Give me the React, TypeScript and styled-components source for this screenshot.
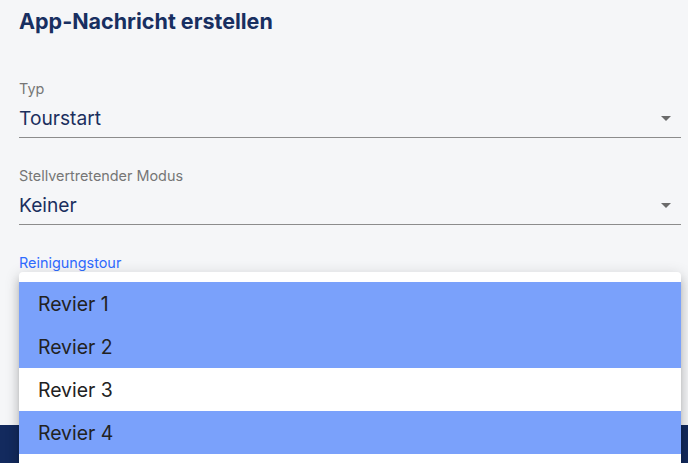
import React from 'react'
import styled, { createGlobalStyle } from 'styled-components'

const GlobalStyle = createGlobalStyle`
  html, body {
    margin: 0;
    padding: 0;
    background: #f5f6f8;
    font-family: Inter, "Noto Sans", sans-serif;
  }
`;

const Page = styled.div`
  position: relative;
  height: 463px;
  display: flex;
  flex-direction: column;
  overflow: hidden;
  background: #f5f6f8;
`;

const Content = styled.div`
  flex: 1;
  padding: 6px 7px 0 19px;
`;

const Title = styled.h1`
  margin: 0 0 45px;
  height: 30px;
  line-height: 30px;
  font-size: 21.5px;
  font-weight: 700;
  color: #182f61;
`;

const Field = styled.div<{ $open?: boolean }>`
  position: relative;
  margin-bottom: 30px;
  border-bottom: ${({ $open }) => ($open ? 'none' : '1px solid #8c8c8c')};
`;

const Label = styled.div<{ $active?: boolean }>`
  font-size: 14.4px;
  line-height: 16px;
  color: ${({ $active }) => ($active ? '#2f6bff' : '#767676')};
`;

const Value = styled.div`
  display: flex;
  align-items: center;
  justify-content: space-between;
  height: 26px;
  margin-top: 8px;
  margin-bottom: 6px;
  font-size: 19.2px;
  color: #1b2f5e;
`;

const Arrow = styled.span`
  width: 0;
  height: 0;
  margin-right: 10px;
  border-left: 5px solid transparent;
  border-right: 5px solid transparent;
  border-top: 5px solid #6b6b6b;
`;

const Menu = styled.ul`
  position: absolute;
  top: 272px;
  left: 19px;
  width: 662px;
  margin: 0;
  padding: 10px 0 20px;
  list-style: none;
  background: #ffffff;
  border-radius: 4px;
  box-shadow: 0 5px 5px -3px rgba(0,0,0,0.2), 0 8px 10px 1px rgba(0,0,0,0.14), 0 3px 14px 2px rgba(0,0,0,0.12);
  z-index: 10;
`;

const Item = styled.li<{ $selected?: boolean }>`
  height: 43px;
  line-height: 44px;
  padding-left: 19px;
  font-size: 19.4px;
  color: #222;
  background: ${({ $selected }) => ($selected ? '#7aa1fb' : '#ffffff')};
`;

const Footer = styled.div`
  height: 38px;
  background: #132a5e;
`;

const reviere = [
  { name: 'Revier 1', selected: true },
  { name: 'Revier 2', selected: true },
  { name: 'Revier 3', selected: false },
  { name: 'Revier 4', selected: true },
];

const App = () => {
  return (
    <Page>
      <GlobalStyle />
      <Content>
        <Title>App-Nachricht erstellen</Title>
        <Field>
          <Label>Typ</Label>
          <Value>Tourstart<Arrow /></Value>
        </Field>
        <Field>
          <Label>Stellvertretender Modus</Label>
          <Value>Keiner<Arrow /></Value>
        </Field>
        <Field $open>
          <Label $active>Reinigungstour</Label>
        </Field>
      </Content>
      <Footer />
      <Menu>
        {reviere.map((r, i) => (
          <Item key={`revier${i}`} $selected={r.selected}>{r.name}</Item>
        ))}
      </Menu>
    </Page>
  );
}

export default App;
